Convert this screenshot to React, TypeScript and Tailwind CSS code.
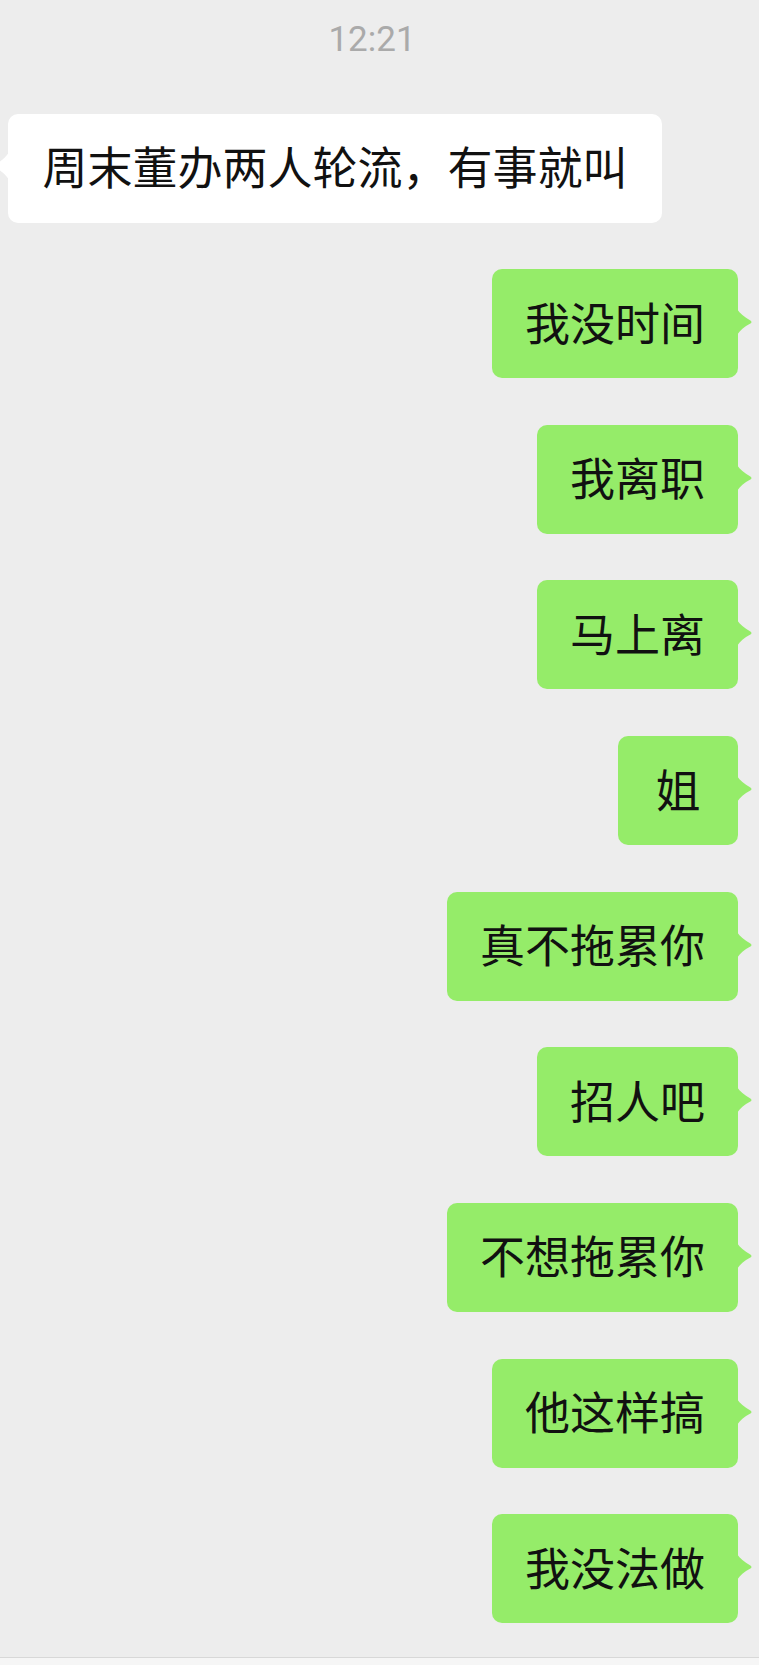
const messages = ['我没时间', '我离职', '马上离', '姐', '真不拖累你', '招人吧', '不想拖累你', '他这样搞', '我没法做']

// pointed tail drawn beside each bubble
function Tail({ side, color }: { side: 'left' | 'right'; color: string }) {
  const d =
    side === 'right'
      ? 'M0 0 C 3 4.5, 7 8, 13.4 11.4 Q 15.5 13 13.4 14.6 C 7 18, 3 21.5, 0 26 Z'
      : 'M15.5 0 C 12.5 4.5, 8.5 8, 2.1 11.4 Q 0 13 2.1 14.6 C 8.5 18, 12.5 21.5, 15.5 26 Z'
  return (
    <svg
      width="16"
      height="26"
      viewBox="0 0 16 26"
      className={side === 'right' ? 'absolute right-[-15px] top-[40px]' : 'absolute left-[-15px] top-[39px]'}
    >
      <path d={d} fill={color} />
    </svg>
  )
}

function Bubble({ text, mine }: { text: string; mine?: boolean }) {
  return (
    <div
      className={`relative h-[109px] min-w-[120px] rounded-[10px] pb-[5px] flex items-center justify-center text-[45px] leading-none text-[#111111] whitespace-nowrap ${
        mine ? 'bg-[#95ec69] px-[33px]' : 'bg-white px-[34.5px]'
      }`}
    >
      {mine ? <Tail side="right" color="#95ec69" /> : <Tail side="left" color="#ffffff" />}
      {text}
    </div>
  )
}

export default function App() {
  return (
    <div
      className="h-[1665px] w-full bg-[#ededed] flex flex-col overflow-hidden"
      style={{ fontFamily: '"Noto Sans CJK SC", "Noto Sans", sans-serif' }}
    >
      {/* Time stamp */}
      <div className="pt-[22px] flex justify-center pr-[15px]">
        <span className="h-[35px] text-[35px] leading-none text-[#aaaaaa]" style={{ fontFamily: 'Roboto, "Liberation Sans", sans-serif' }}>
          12:21
        </span>
      </div>

      {/* Messages */}
      <div className="mt-[56.5px] flex flex-col gap-[46.65px]">
        <div className="flex justify-start pl-[8px]">
          <Bubble text="周末董办两人轮流，有事就叫" />
        </div>
        {messages.map((m, i) => (
          <div key={i} className="flex justify-end pr-[21px]">
            <Bubble text={m} mine />
          </div>
        ))}
      </div>

      <div className="flex-1" />

      {/* Input bar edge */}
      <div className="h-[8px] border-t border-[#d8d8d8] bg-[#f6f6f6]" />
    </div>
  )
}
